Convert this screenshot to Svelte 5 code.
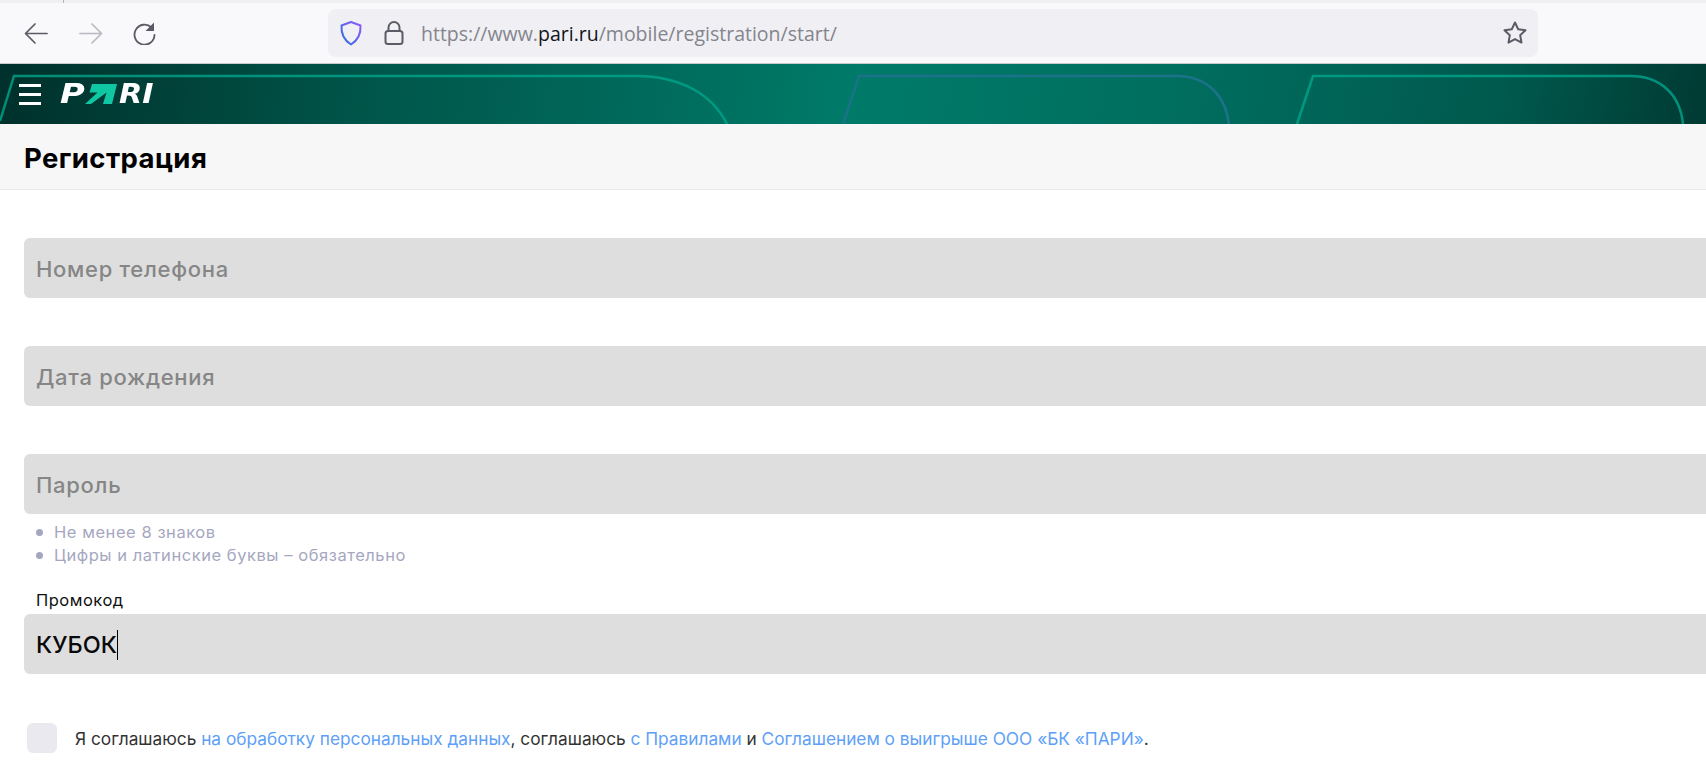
<script>
    let fields = [
        { placeholder: 'Номер телефона' },
        { placeholder: 'Дата рождения' },
        { placeholder: 'Пароль' }
    ];
</script>

<div class="page">
    <div class="tabstrip"><span class="tick"></span></div>

    <div class="toolbar">
        <svg class="nav back" width="24" height="24" viewBox="0 0 24 24" fill="none" stroke="currentColor" stroke-width="1.7" stroke-linecap="round" stroke-linejoin="round">
            <path d="M23 12.500H2M11 3l-9.500 9.500L11 22" />
        </svg>
        <svg class="nav forward" width="24" height="24" viewBox="0 0 24 24" fill="none" stroke="currentColor" stroke-width="1.7" stroke-linecap="round" stroke-linejoin="round">
            <path d="M1 12.500h21M13 3l9.500 9.500L13 22" />
        </svg>
        <svg class="nav reload" width="24" height="24" viewBox="0 0 24 24" fill="none">
            <path d="M19.500 6.500A10 10 0 1 0 22.500 14" stroke="currentColor" stroke-width="1.800" stroke-linecap="round" />
            <path d="M22 1.500V10h-8.500z" fill="currentColor" />
        </svg>

        <div class="urlbar">
            <svg class="shield" width="24" height="26" viewBox="0 0 24 26" fill="none" stroke="url(#shield-grad)" stroke-width="2" stroke-linejoin="round">
                <defs>
                    <linearGradient id="shield-grad" x1="1" y1="0" x2="0" y2="1">
                        <stop offset="0" stop-color="#9059ff" />
                        <stop offset="1" stop-color="#2f6fe0" />
                    </linearGradient>
                </defs>
                <path d="M12 2l9.500 3.500c.5 8-1.500 14-9.500 19C4 19.500 2 13.500 2.500 5.500z" />
            </svg>
            <svg class="lock" width="20" height="26" viewBox="0 0 20 26" fill="none" stroke="#5b5b66" stroke-width="2">
                <rect x="1.500" y="11" width="17" height="13" rx="2.500" />
                <path d="M4.500 11V7.500a5.500 5.500 0 0 1 11 0V11" />
            </svg>
            <span class="url">https://www.<b>pari.ru</b>/mobile/registration/start/</span>
            <svg class="star" width="26" height="26" viewBox="0 0 26 26" fill="none" stroke="#5b5b66" stroke-width="2" stroke-linejoin="round">
                <path d="M13 2.500l3.200 6.700 7.300 1-5.300 5.100 1.300 7.300-6.500-3.500-6.500 3.500 1.300-7.300-5.300-5.100 7.300-1z" />
            </svg>
        </div>
    </div>

    <header class="banner">
        <svg class="lines" width="1706" height="60" viewBox="0 0 1706 60" fill="none" stroke-width="2.500">
            <defs>
                <filter id="soft" x="-5%" y="-5%" width="110%" height="110%">
                    <feGaussianBlur stdDeviation="0.700" />
                </filter>
            </defs>
            <g filter="url(#soft)">
                <path d="M0 57L14 12H636C680 12 712 30 727 60" stroke="#00a58c" stroke-opacity="0.800" />
                <path d="M843 60L859 12H1176C1206 12 1225 30 1229 60" stroke="#1c7288" />
                <path d="M1297 60L1313 12H1630C1660 12 1680 30 1683 60" stroke="#00a58c" stroke-opacity="0.800" />
            </g>
        </svg>
        <div class="burger"><span></span><span></span><span></span></div>
        <div class="logo">
            <span class="p">P</span>
            <svg width="32" height="20" viewBox="0 0 32 20">
                <path d="M7 0H32L27 20H18L21.500 8.500L6 20H0L12.500 8.500H4.500z" fill="#10c7a3" />
            </svg>
            <span class="ri">RI</span>
        </div>
    </header>

    <div class="title-bar">
        <h1>Регистрация</h1>
    </div>

    <form class="form">
        {#each fields as field}
            <div class="field">{field.placeholder}</div>
        {/each}

        <ul class="hints">
            <li>Не менее 8 знаков</li>
            <li>Цифры и латинские буквы – обязательно</li>
        </ul>

        <div class="label">Промокод</div>
        <div class="field filled">КУБОК<span class="caret"></span></div>

        <div class="consent">
            <span class="checkbox"></span>
            <p>
                Я соглашаюсь <a href="#personal">на обработку персональных данных</a>, соглашаюсь
                <a href="#rules">с Правилами</a> и <a href="#win">Соглашением о выигрыше ООО «БК «ПАРИ»</a>.
            </p>
        </div>
    </form>
</div>

<style>
    :global(body) {
        margin: 0;
        background: #fff;
    }

    .page {
        width: 1706px;
        height: 768px;
        overflow: hidden;
        font-family: Inter, 'Noto Sans', sans-serif;
    }

    .tabstrip {
        height: 3px;
        background: #f0f0f0;
    }

    .tick {
        display: block;
        width: 1px;
        height: 3px;
        margin-left: 63px;
        background: #b5b5b5;
    }

    .toolbar {
        height: 60px;
        display: flex;
        align-items: center;
        background: #f9f9fb;
        border-bottom: 1px solid #c9c9cc;
        color: #5b5b66;
    }

    .nav {
        flex-shrink: 0;
    }

    .back {
        margin-left: 24px;
    }

    .forward {
        margin-left: 31px;
        color: #b9b9c0;
    }

    .reload {
        margin-left: 29px;
    }

    .urlbar {
        width: 1210px;
        height: 48px;
        margin-left: 172px;
        display: flex;
        align-items: center;
        background: #f0f0f4;
        border-radius: 8px;
    }

    .shield {
        margin-left: 11px;
    }

    .lock {
        margin-left: 21px;
    }

    .url {
        margin-left: 17px;
        flex: 1;
        font-family: 'Open Sans', sans-serif;
        font-size: 19.500px;
        color: #84848c;
    }

    .url b {
        font-weight: 400;
        color: #15141a;
    }

    .star {
        margin-right: 10px;
    }

    .banner {
        position: relative;
        height: 60px;
        display: flex;
        align-items: center;
        overflow: hidden;
        background: linear-gradient(97deg, #00302b 0%, #00564a 22%, #007a69 50%, #006f60 68%, #00594d 88%, #003a33 100%);
    }

    .lines {
        position: absolute;
        left: 0;
        top: 0;
    }

    .burger {
        position: relative;
        margin-left: 19px;
        display: flex;
        flex-direction: column;
        gap: 6px;
    }

    .burger span {
        display: block;
        width: 22px;
        height: 3px;
        background: #fff;
    }

    .logo {
        position: relative;
        margin-left: 19px;
        display: flex;
        align-items: center;
        font-family: 'DejaVu Sans', sans-serif;
        font-size: 27px;
        font-weight: 700;
        font-style: italic;
        line-height: 20px;
        color: #fff;
    }

    .logo span {
        display: inline-block;
        transform-origin: left center;
    }

    .logo .p {
        width: 23px;
        transform: scaleX(1.250);
    }

    .logo .ri {
        width: 35px;
        transform: scaleX(1.120);
    }

    .logo svg {
        margin: 0 2px;
    }

    .title-bar {
        display: flex;
        align-items: center;
        padding: 2px 0 0 24px;
        box-sizing: border-box;
        height: 66px;
        background: #f7f7f7;
        border-bottom: 1px solid #eaeaea;
    }

    h1 {
        margin: 0;
        font-size: 27.500px;
        font-weight: 700;
        letter-spacing: 0.400px;
        color: #000;
    }

    .form {
        padding: 48px 0 0 24px;
    }

    .field {
        width: 1720px;
        height: 59px;
        margin-bottom: 48px;
        padding: 1px 0 0 12px;
        display: flex;
        align-items: center;
        background: #dedede;
        border-radius: 6px;
        font-size: 22px;
        font-weight: 500;
        letter-spacing: 0.700px;
        color: #868686;
    }

    .field:nth-child(3) {
        margin-bottom: 0;
    }

    .field.filled {
        margin-bottom: 0;
        font-size: 23.500px;
        letter-spacing: 0;
        color: #0a0a0a;
    }

    .caret {
        width: 1px;
        height: 30px;
        background: #000;
    }

    .hints {
        margin: 7px 0 0;
        padding: 0 0 0 12px;
        list-style: none;
        font-size: 16.500px;
        line-height: 23px;
        letter-spacing: 0.550px;
        color: #a5a7c0;
    }

    .hints li {
        display: flex;
        align-items: center;
    }

    .hints li::before {
        content: '';
        width: 7px;
        height: 7px;
        margin-right: 11px;
        border-radius: 50%;
        background: #a5a7c0;
    }

    .label {
        margin: 21px 0 2px 12px;
        font-size: 16.500px;
        line-height: 24px;
        letter-spacing: 0.500px;
        color: #111;
    }

    .consent {
        margin-top: 49px;
        display: flex;
        align-items: center;
        gap: 18px;
        padding-left: 3px;
    }

    .checkbox {
        width: 30px;
        height: 30px;
        flex-shrink: 0;
        border-radius: 6px;
        background: #e9e9ef;
    }

    .consent p {
        margin: 0;
        font-size: 17.270px;
        color: #333;
    }

    .consent a {
        color: #5ea0f8;
        text-decoration: none;
    }
</style>
